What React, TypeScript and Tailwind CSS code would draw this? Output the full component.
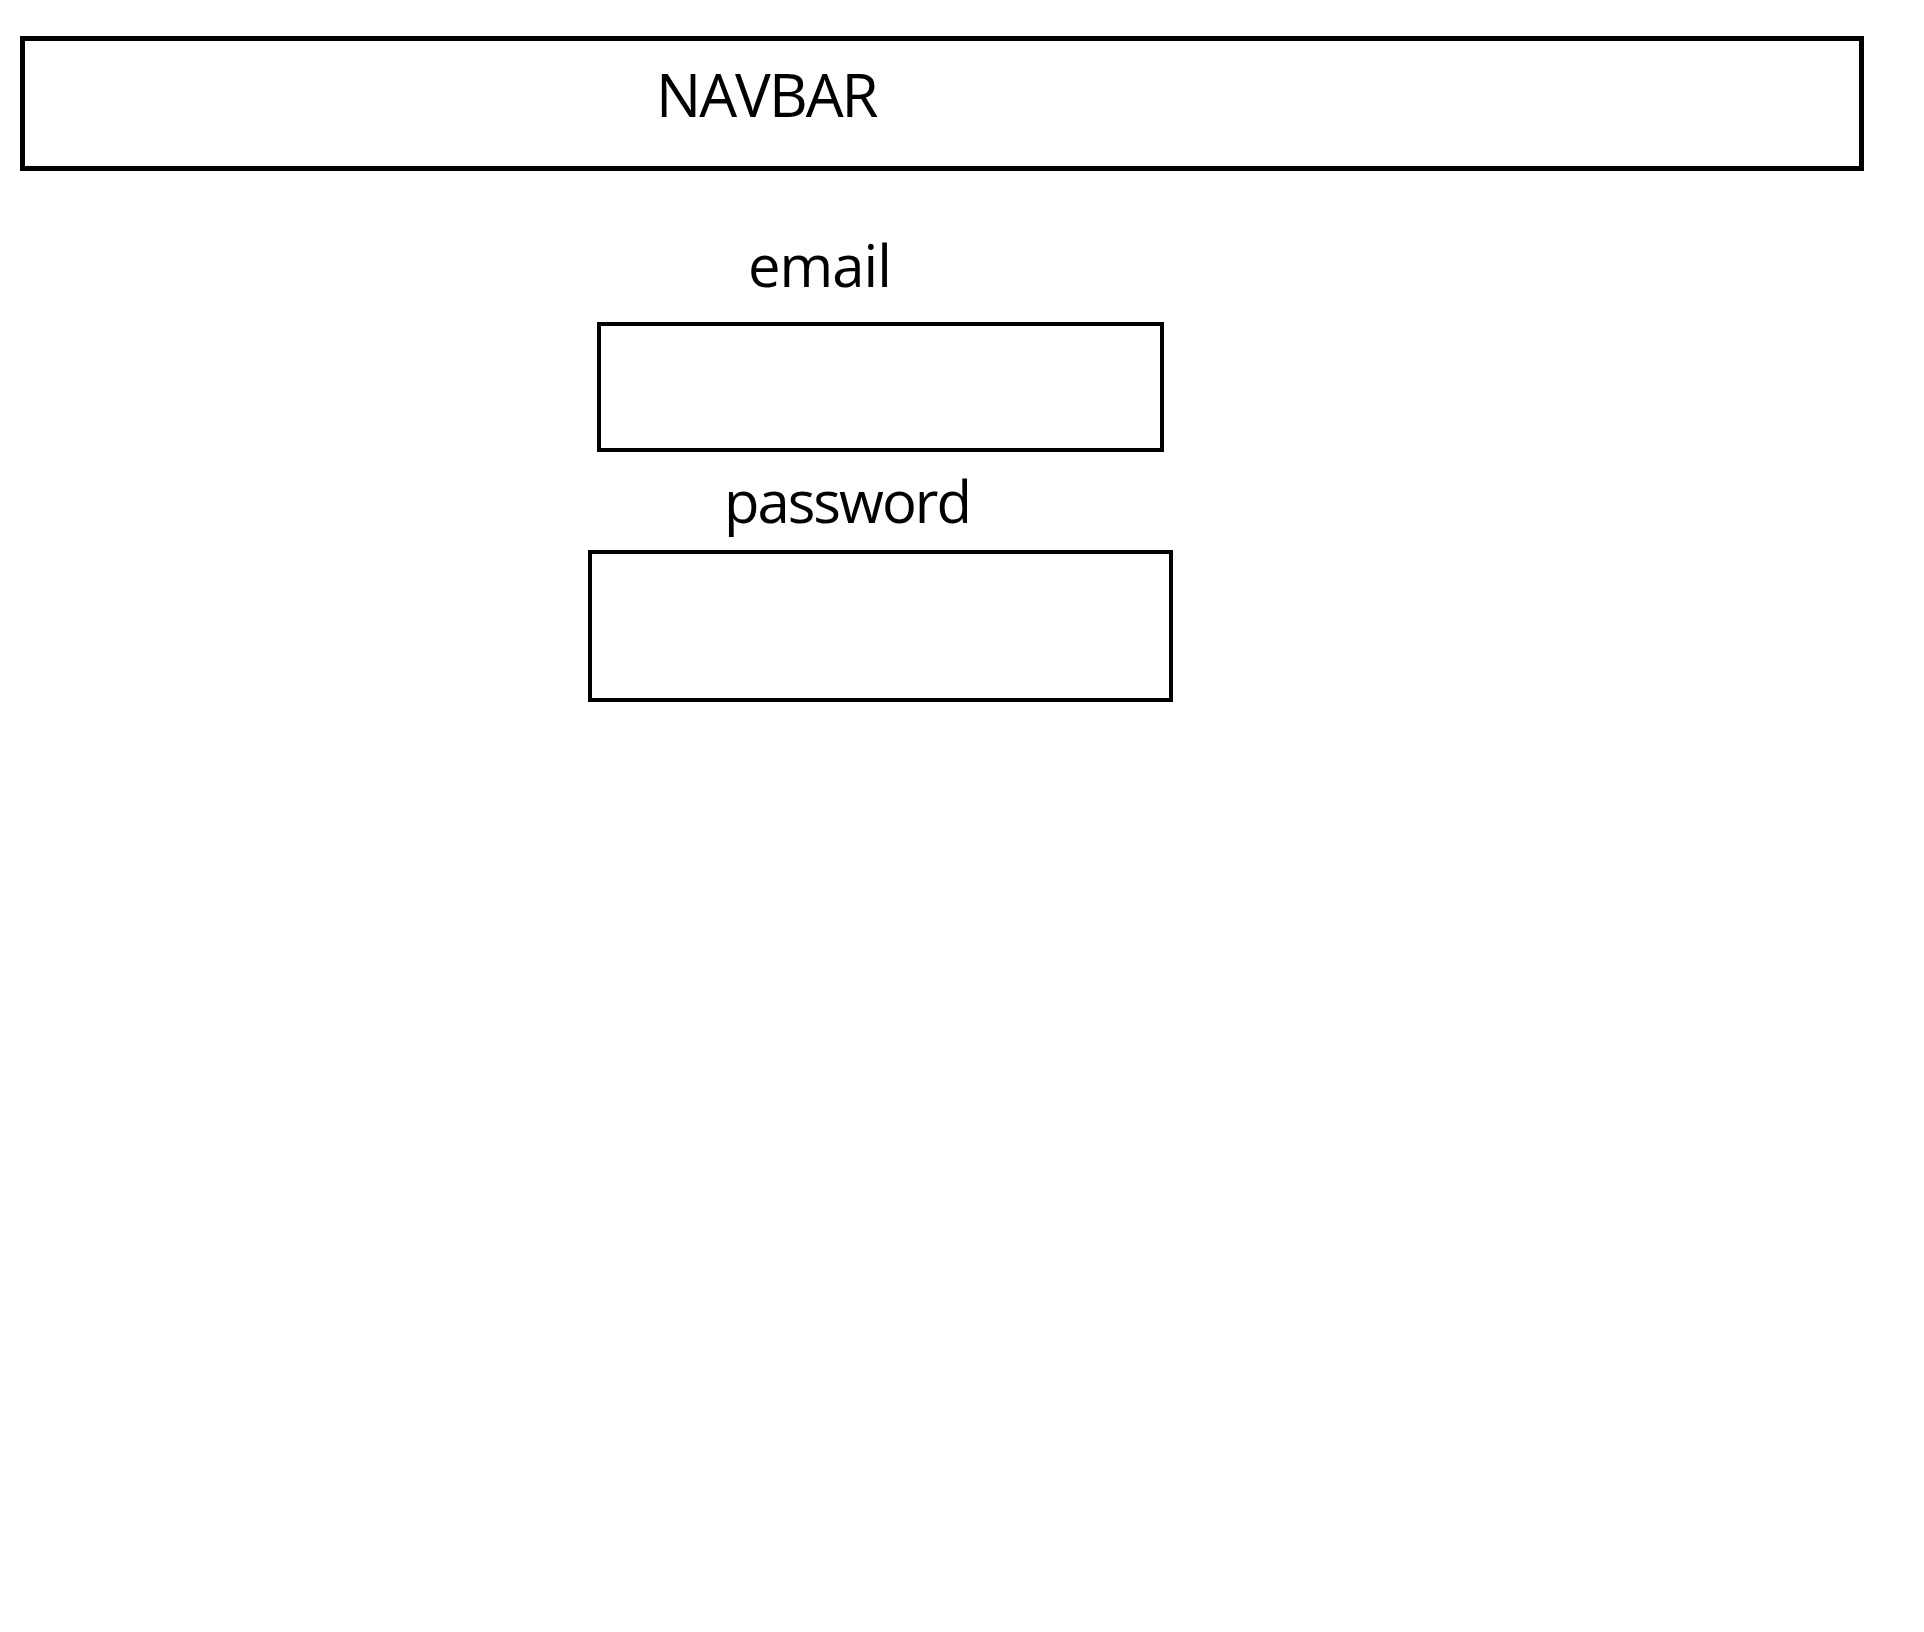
const App = () => {
  return (
    <div
      className="min-h-[1632px] w-[1924px] bg-white pl-[20px] pt-[36px] text-black"
      style={{ fontFamily: '"Open Sans", "Noto Sans", sans-serif' }}
    >
      <div className="h-[135px] w-[1844px] border-[5px] border-black pl-[631px] pt-[23px]">
        <p className="text-[60px] leading-none tracking-[-2px]">NAVBAR</p>
      </div>

      <form className="flex flex-col items-start">
        <label className="ml-[728px] mt-[65px] text-[58px] leading-none tracking-[-1px]">
          email
        </label>
        <input
          type="email"
          className="ml-[577px] mt-[28px] h-[130px] w-[567px] border-4 border-black outline-none"
        />
        <label className="ml-[704px] mt-[20px] text-[58px] leading-none tracking-[-2px]">
          password
        </label>
        <input
          type="password"
          className="ml-[568px] mt-[20px] h-[152px] w-[585px] border-4 border-black outline-none"
        />
      </form>
    </div>
  );
};

export default App;
